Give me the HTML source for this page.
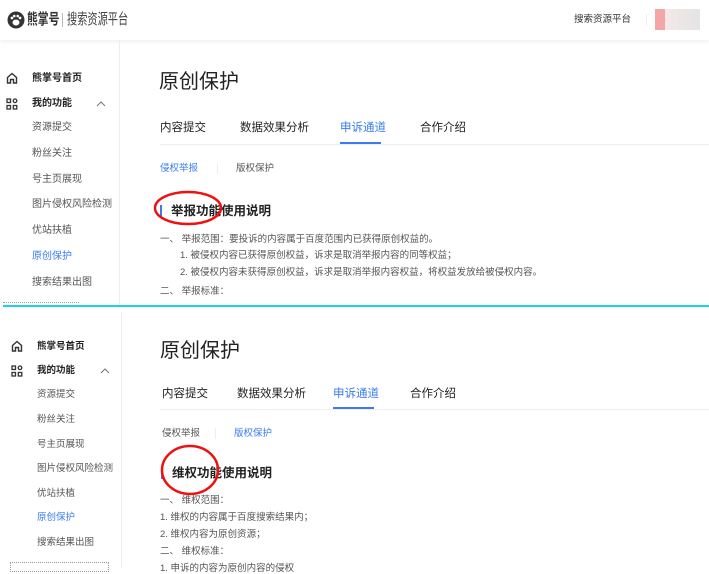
<!DOCTYPE html>
<html><head><meta charset="utf-8"><style>
*{margin:0;padding:0;box-sizing:border-box}
body{width:709px;height:568px;overflow:hidden;background:#fff;position:relative;font-family:"Liberation Sans","Noto Sans CJK SC",sans-serif;color:#333}
.a{position:absolute;white-space:nowrap;line-height:1}
.s{font-size:10px;color:#555}
.t{font-size:11.5px;color:#222}
.p{font-size:9.5px;color:#555}
.h{font-size:12.5px;font-weight:bold;color:#222}
.b{color:#3a7cf0}
</style></head><body>
<!-- header -->
<div class="a" style="left:0;top:0;width:709px;height:40px;box-shadow:0 2px 4px rgba(0,0,0,.06)"></div>
<svg class="a" style="left:7px;top:11px" width="18" height="18" viewBox="0 0 18 18"><circle cx="9" cy="9" r="8.5" fill="#333"/><ellipse cx="9" cy="11.5" rx="3.5" ry="3" fill="#fff"/><circle cx="5" cy="7" r="1.4" fill="#fff"/><circle cx="13" cy="7" r="1.4" fill="#fff"/><circle cx="7.3" cy="5" r="1.3" fill="#fff"/><circle cx="10.7" cy="5" r="1.3" fill="#fff"/></svg>
<div class="a" style="left:27px;top:12px;font-size:15px;font-weight:bold;color:#333;transform:scaleX(.72);transform-origin:left">熊掌号</div>
<div class="a" style="left:62px;top:13px;width:1px;height:14px;background:#bbb"></div>
<div class="a" style="left:67px;top:12px;font-size:15px;color:#444;transform:scaleX(.68);transform-origin:left">搜索资源平台</div>
<div class="a" style="left:574px;top:15px;font-size:9.5px;color:#333">搜索资源平台</div>
<div class="a" style="left:646px;top:14px;width:1px;height:12px;background:#eee"></div>
<div class="a" style="left:655px;top:9px;width:10px;height:21px;background:#f08080;opacity:.7"></div>
<div class="a" style="left:665px;top:9px;width:35px;height:21px;background:linear-gradient(90deg,#f5e8e8,#e4e4e4)"></div>
<!-- top sidebar -->
<div class="a" style="left:119px;top:40px;width:1px;height:266px;background:#eee"></div>
<svg class="a" style="left:6px;top:72px" width="12" height="12" viewBox="0 0 12 12" fill="none" stroke="#333" stroke-width="1.4"><path d="M1.5 5.5L6 1.5l4.5 4V11h-3V7.5h-3V11h-3z"/></svg>
<svg class="a" style="left:6px;top:98px" width="12" height="12" viewBox="0 0 12 12" fill="none" stroke="#333" stroke-width="1.3"><rect x="1" y="1" width="3.5" height="3.5"/><circle cx="9" cy="2.8" r="1.8"/><rect x="1" y="7.5" width="3.5" height="3.5"/><rect x="7.3" y="7.5" width="3.5" height="3.5"/></svg>
<div class="a s" style="left:32px;top:74px;font-weight:bold;color:#222">熊掌号首页</div>
<div class="a s" style="left:32px;top:99px;font-weight:bold;color:#222">我的功能</div>
<svg class="a" style="left:96px;top:100px" width="10" height="7" viewBox="0 0 10 7" fill="none" stroke="#777" stroke-width="1"><path d="M1 6l4-4 4 4"/></svg>
<div class="a s" style="left:32px;top:123px">资源提交</div>
<div class="a s" style="left:32px;top:149px">粉丝关注</div>
<div class="a s" style="left:32px;top:175px">号主页展现</div>
<div class="a s" style="left:32px;top:200px">图片侵权风险检测</div>
<div class="a s" style="left:32px;top:226px">优站扶植</div>
<div class="a s b" style="left:32px;top:252px">原创保护</div>
<div class="a s" style="left:32px;top:278px">搜索结果出图</div>
<div class="a" style="left:3px;top:302px;width:76px;border-top:1px dotted #999"></div>
<!-- top main -->
<div class="a" style="left:159px;top:72px;font-size:20px;color:#222">原创保护</div>
<div class="a t" style="left:160px;top:123px">内容提交</div>
<div class="a t" style="left:240px;top:123px">数据效果分析</div>
<div class="a t b" style="left:340px;top:123px">申诉通道</div>
<div class="a t" style="left:420px;top:123px">合作介绍</div>
<div class="a" style="left:160px;top:144px;width:549px;height:1px;background:#eee"></div>
<div class="a" style="left:340px;top:142px;width:41px;height:2px;background:#3a7cf0"></div>
<div class="a p b" style="left:160px;top:164px">侵权举报</div>
<div class="a" style="left:217px;top:163px;width:1px;height:11px;background:#eee"></div>
<div class="a p" style="left:236px;top:164px">版权保护</div>
<div class="a" style="left:160px;top:205px;width:2px;height:12px;background:#3a7cf0"></div>
<div class="a h" style="left:171px;top:205px">举报功能使用说明</div>
<div class="a p" style="left:160px;top:235px">一、 举报范围：要投诉的内容属于百度范围内已获得原创权益的。</div>
<div class="a p" style="left:180px;top:251px">1. 被侵权内容已获得原创权益，诉求是取消举报内容的同等权益；</div>
<div class="a p" style="left:180px;top:268px">2. 被侵权内容未获得原创权益，诉求是取消举报内容权益，将权益发放给被侵权内容。</div>
<div class="a p" style="left:160px;top:287px">二、 举报标准：</div>
<svg class="a" style="left:150px;top:188px" width="80" height="40"><ellipse cx="38" cy="20" rx="33" ry="16" fill="none" stroke="#e11" stroke-width="2.5"/></svg>
<div class="a" style="left:3px;top:305px;width:706px;height:2px;background:#1fd0ea"></div>
<!-- bottom sidebar -->
<div class="a" style="left:121px;top:312px;width:1px;height:256px;background:#eee"></div>
<svg class="a" style="left:11px;top:340px" width="12" height="12" viewBox="0 0 12 12" fill="none" stroke="#333" stroke-width="1.4"><path d="M1.5 5.5L6 1.5l4.5 4V11h-3V7.5h-3V11h-3z"/></svg>
<svg class="a" style="left:11px;top:365px" width="12" height="12" viewBox="0 0 12 12" fill="none" stroke="#333" stroke-width="1.3"><rect x="1" y="1" width="3.5" height="3.5"/><circle cx="9" cy="2.8" r="1.8"/><rect x="1" y="7.5" width="3.5" height="3.5"/><rect x="7.3" y="7.5" width="3.5" height="3.5"/></svg>
<div class="a s" style="left:37px;top:342px;font-weight:bold;color:#222;font-size:9.5px">熊掌号首页</div>
<div class="a s" style="left:37px;top:366px;font-weight:bold;color:#222;font-size:9.5px">我的功能</div>
<svg class="a" style="left:100px;top:367px" width="10" height="7" viewBox="0 0 10 7" fill="none" stroke="#777" stroke-width="1"><path d="M1 6l4-4 4 4"/></svg>
<div class="a s" style="left:37px;top:390px;font-size:9.5px">资源提交</div>
<div class="a s" style="left:37px;top:415px;font-size:9.5px">粉丝关注</div>
<div class="a s" style="left:37px;top:440px;font-size:9.5px">号主页展现</div>
<div class="a s" style="left:37px;top:464px;font-size:9.5px">图片侵权风险检测</div>
<div class="a s" style="left:37px;top:489px;font-size:9.5px">优站扶植</div>
<div class="a s b" style="left:37px;top:513px;font-size:9.5px">原创保护</div>
<div class="a s" style="left:37px;top:538px;font-size:9.5px">搜索结果出图</div>
<div class="a" style="left:10px;top:562px;width:99px;height:10px;border:1px dotted #999"></div>
<!-- bottom main -->
<div class="a" style="left:160px;top:341px;font-size:20px;color:#222">原创保护</div>
<div class="a t" style="left:162px;top:389px">内容提交</div>
<div class="a t" style="left:237px;top:389px">数据效果分析</div>
<div class="a t b" style="left:333px;top:389px">申诉通道</div>
<div class="a t" style="left:410px;top:389px">合作介绍</div>
<div class="a" style="left:160px;top:409px;width:549px;height:1px;background:#eee"></div>
<div class="a" style="left:333px;top:407px;width:41px;height:2px;background:#3a7cf0"></div>
<div class="a p" style="left:162px;top:429px">侵权举报</div>
<div class="a" style="left:215px;top:428px;width:1px;height:11px;background:#eee"></div>
<div class="a p b" style="left:234px;top:429px">版权保护</div>
<div class="a" style="left:161px;top:467px;width:2px;height:12px;background:#3a7cf0"></div>
<div class="a h" style="left:172px;top:467px">维权功能使用说明</div>
<div class="a p" style="left:160px;top:496px">一、 维权范围：</div>
<div class="a p" style="left:160px;top:513px">1. 维权的内容属于百度搜索结果内；</div>
<div class="a p" style="left:160px;top:530px">2. 维权内容为原创资源；</div>
<div class="a p" style="left:160px;top:547px">二、 维权标准：</div>
<div class="a p" style="left:160px;top:564px">1. 申诉的内容为原创内容的侵权</div>
<svg class="a" style="left:158px;top:443px" width="66" height="56"><ellipse cx="32" cy="27" rx="28" ry="24" fill="none" stroke="#e11" stroke-width="2.5"/></svg>
</body></html>
